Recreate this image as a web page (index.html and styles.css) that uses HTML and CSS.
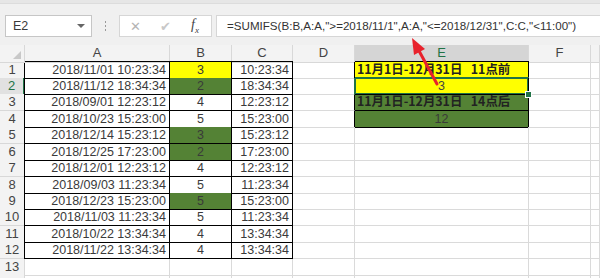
FILE: index.html
```html
<!DOCTYPE html>
<html>
	<head>
		<meta charset="utf-8">
		<link rel="stylesheet" href="styles.css">
	</head>
	<body>
		<div class="ribbon-edge"></div>
		<div class="formula-bar">
			<div class="name-box">
				<span>E2</span>
				<span class="name-drop"></span>
			</div>
			<div class="bar-grip"><i></i><i></i><i></i></div>
			<div class="fx-box">
				<span class="fx-btn fx-cancel">&#x2715;</span>
				<span class="fx-btn fx-ok">&#x2714;</span>
				<span class="fx-btn fx-fn"><i>f</i><sub>x</sub></span>
			</div>
			<div class="formula-input">=SUMIFS(B:B,A:A,"&gt;=2018/11/1",A:A,"&lt;=2018/12/31",C:C,"&lt;11:00")</div>
		</div>
		<div class="sheet">
			<div class="row head-row">
				<div class="corner"><span class="corner-tri"></span></div>
				<div class="col-head">A</div>
				<div class="col-head">B</div>
				<div class="col-head">C</div>
				<div class="col-head">D</div>
				<div class="col-head col-sel">E</div>
				<div class="col-head">F</div>
				<div class="col-head"></div>
			</div>
			<div class="row">
				<div class="row-head">1</div>
				<div class="cell num bx bx-l bx-t">2018/11/01 10:23:34</div>
				<div class="cell mid bx bx-t fill-yellow">3</div>
				<div class="cell num bx bx-t">10:23:34</div>
				<div class="cell edge-r"></div>
				<div class="cell label bx bx-t fill-yellow">11月1日-12月31日   11点前</div>
				<div class="cell"></div>
				<div class="cell"></div>
			</div>
			<div class="row">
				<div class="row-head row-sel">2</div>
				<div class="cell num bx bx-l">2018/11/12 18:34:34</div>
				<div class="cell mid bx fill-green">2</div>
				<div class="cell num bx">18:34:34</div>
				<div class="cell edge-r"></div>
				<div class="cell mid bx fill-yellow active">3<span class="fill-handle"></span></div>
				<div class="cell"></div>
				<div class="cell"></div>
			</div>
			<div class="row">
				<div class="row-head">3</div>
				<div class="cell num bx bx-l">2018/09/01 12:23:12</div>
				<div class="cell mid bx">4</div>
				<div class="cell num bx">12:23:12</div>
				<div class="cell edge-r"></div>
				<div class="cell label bx fill-green">11月1日-12月31日   14点后</div>
				<div class="cell"></div>
				<div class="cell"></div>
			</div>
			<div class="row">
				<div class="row-head">4</div>
				<div class="cell num bx bx-l">2018/10/23 15:23:00</div>
				<div class="cell mid bx">5</div>
				<div class="cell num bx">15:23:00</div>
				<div class="cell edge-r"></div>
				<div class="cell mid bx fill-green">12</div>
				<div class="cell"></div>
				<div class="cell"></div>
			</div>
			<div class="row">
				<div class="row-head">5</div>
				<div class="cell num bx bx-l">2018/12/14 15:23:12</div>
				<div class="cell mid bx fill-green">3</div>
				<div class="cell num bx">15:23:12</div>
				<div class="cell"></div>
				<div class="cell"></div>
				<div class="cell"></div>
				<div class="cell"></div>
			</div>
			<div class="row">
				<div class="row-head">6</div>
				<div class="cell num bx bx-l">2018/12/25 17:23:00</div>
				<div class="cell mid bx fill-green">2</div>
				<div class="cell num bx">17:23:00</div>
				<div class="cell"></div>
				<div class="cell"></div>
				<div class="cell"></div>
				<div class="cell"></div>
			</div>
			<div class="row">
				<div class="row-head">7</div>
				<div class="cell num bx bx-l">2018/12/01 12:23:12</div>
				<div class="cell mid bx">4</div>
				<div class="cell num bx">12:23:12</div>
				<div class="cell"></div>
				<div class="cell"></div>
				<div class="cell"></div>
				<div class="cell"></div>
			</div>
			<div class="row">
				<div class="row-head">8</div>
				<div class="cell num bx bx-l">2018/09/03 11:23:34</div>
				<div class="cell mid bx">5</div>
				<div class="cell num bx">11:23:34</div>
				<div class="cell"></div>
				<div class="cell"></div>
				<div class="cell"></div>
				<div class="cell"></div>
			</div>
			<div class="row">
				<div class="row-head">9</div>
				<div class="cell num bx bx-l">2018/12/23 15:23:00</div>
				<div class="cell mid bx fill-green">5</div>
				<div class="cell num bx">15:23:00</div>
				<div class="cell"></div>
				<div class="cell"></div>
				<div class="cell"></div>
				<div class="cell"></div>
			</div>
			<div class="row">
				<div class="row-head">10</div>
				<div class="cell num bx bx-l">2018/11/03 11:23:34</div>
				<div class="cell mid bx">5</div>
				<div class="cell num bx">11:23:34</div>
				<div class="cell"></div>
				<div class="cell"></div>
				<div class="cell"></div>
				<div class="cell"></div>
			</div>
			<div class="row">
				<div class="row-head">11</div>
				<div class="cell num bx bx-l">2018/10/22 13:34:34</div>
				<div class="cell mid bx">4</div>
				<div class="cell num bx">13:34:34</div>
				<div class="cell"></div>
				<div class="cell"></div>
				<div class="cell"></div>
				<div class="cell"></div>
			</div>
			<div class="row">
				<div class="row-head">12</div>
				<div class="cell num bx bx-l">2018/11/22 13:34:34</div>
				<div class="cell mid bx">4</div>
				<div class="cell num bx">13:34:34</div>
				<div class="cell"></div>
				<div class="cell"></div>
				<div class="cell"></div>
				<div class="cell"></div>
			</div>
			<div class="row">
				<div class="row-head">13</div>
				<div class="cell"></div>
				<div class="cell"></div>
				<div class="cell"></div>
				<div class="cell"></div>
				<div class="cell"></div>
				<div class="cell"></div>
				<div class="cell"></div>
			</div>
			<div class="row">
				<div class="row-head"></div>
				<div class="cell"></div>
				<div class="cell"></div>
				<div class="cell"></div>
				<div class="cell"></div>
				<div class="cell"></div>
				<div class="cell"></div>
				<div class="cell"></div>
			</div>
		</div>
		<svg class="arrow" width="600" height="278" viewBox="0 0 600 278">
			<line x1="437" y1="84" x2="418" y2="49" stroke="#e8222c" stroke-width="3" stroke-linecap="round"/>
			<polygon points="412,38 425,49 414,55" fill="#e8222c"/>
		</svg>
	</body>
</html>
```
FILE: styles.css
```css
body
{
	margin: 0;
	width: 600px;
	height: 278px;
	overflow: hidden;
	position: relative;
	background-color: #f0f0f0;
	font-family: "Liberation Sans", Arial, "Noto Sans CJK SC", sans-serif;
	color: #3a3a3a;
}
.ribbon-edge
{
	height: 3px;
	background-color: #e6e6e6;
	border-bottom: 1px solid #dcdcdc;
}
.formula-bar
{
	display: flex;
	height: 22px;
	padding: 11px 0 8px 5px;
}
.name-box
{
	display: flex;
	align-items: center;
	justify-content: space-between;
	box-sizing: border-box;
	width: 87px;
	padding: 0 6px 0 7px;
	background-color: white;
	border: 1px solid #c6c6c6;
	font-size: 12.5px;
}
.name-drop
{
	width: 0;
	height: 0;
	border-left: 4px solid transparent;
	border-right: 4px solid transparent;
	border-top: 4px solid #666;
}
.bar-grip
{
	display: flex;
	flex-flow: column;
	align-items: center;
	justify-content: center;
	gap: 2px;
	width: 27px;
}
.bar-grip i
{
	width: 1px;
	height: 2px;
	background-color: #999;
}
.fx-box
{
	display: flex;
	align-items: center;
	box-sizing: border-box;
	width: 93px;
	margin-right: 4px;
	background-color: white;
	border: 1px solid #d6d6d6;
}
.fx-btn
{
	width: 30px;
	text-align: center;
	font-size: 13px;
}
.fx-cancel
{
	color: #b4b4b4;
}
.fx-ok
{
	color: #c8c8c8;
}
.fx-fn
{
	color: #444;
	font-family: "Liberation Serif", serif;
	font-size: 14px;
}
.fx-fn sub
{
	font-size: 9px;
	font-style: italic;
}
.formula-input
{
	flex: 1;
	box-sizing: border-box;
	padding-left: 10px;
	line-height: 20px;
	background-color: white;
	border: 1px solid #d6d6d6;
	border-right: none;
	font-size: 11.6px;
	color: #333;
	white-space: pre;
	overflow: hidden;
}
.sheet
{
	background-color: white;
}
.row
{
	display: grid;
	grid-template-columns: 25px 145px 62px 61px 62px 174px 62px 1fr;
	height: 16.45px;
}
.head-row
{
	height: 16.5px;
}
.corner,
.col-head,
.row-head
{
	box-sizing: border-box;
	background-color: #f3f3f3;
	border-right: 1px solid #d8d8d8;
	border-bottom: 1px solid #d8d8d8;
	color: #444;
	font-size: 13px;
	text-align: center;
	line-height: 16px;
}
.corner
{
	position: relative;
}
.corner-tri
{
	position: absolute;
	right: 3px;
	bottom: 3px;
	width: 0;
	height: 0;
	border-left: 8px solid transparent;
	border-bottom: 8px solid #c8c8c8;
}
.col-sel
{
	background-color: #d5d5d5;
	color: #217346;
	border-bottom: 2px solid #217346;
}
.row-sel
{
	background-color: #e1e1e1;
	color: #217346;
	border-right: 2px solid #217346;
}
.cell
{
	box-sizing: border-box;
	border-right: 1px solid #dadada;
	border-bottom: 1px solid #dadada;
	font-size: 12.5px;
	line-height: 16px;
	white-space: pre;
	overflow: visible;
}
.num
{
	text-align: right;
	padding-right: 3px;
}
.mid
{
	text-align: center;
}
.label
{
	padding-left: 2px;
	font-family: "Noto Sans CJK SC", sans-serif;
	font-weight: bold;
	font-size: 12.4px;
	line-height: 15px;
	color: #222;
}
.bx
{
	border-right-color: #000;
	border-bottom-color: #000;
}
.bx-l
{
	box-shadow: -1px 0 0 #000;
}
.bx-t
{
	box-shadow: 0 -1px 0 #000;
}
.bx-l.bx-t
{
	box-shadow: -1px 0 0 #000, 0 -1px 0 #000, -1px -1px 0 #000;
}
.edge-r
{
	border-right-color: #000;
}
.fill-yellow
{
	background-color: #ffff00;
}
.fill-green
{
	background-color: #548235;
}
.active
{
	position: relative;
	color: #444;
	box-shadow: inset 0 0 0 1px #217346, -1px 0 0 #217346, 0 -1px 0 #217346;
}
.fill-handle
{
	position: absolute;
	right: -4px;
	bottom: -4px;
	width: 5px;
	height: 5px;
	background-color: #217346;
	border: 1px solid white;
}
.arrow
{
	position: absolute;
	left: 0;
	top: 0;
	pointer-events: none;
}
```
